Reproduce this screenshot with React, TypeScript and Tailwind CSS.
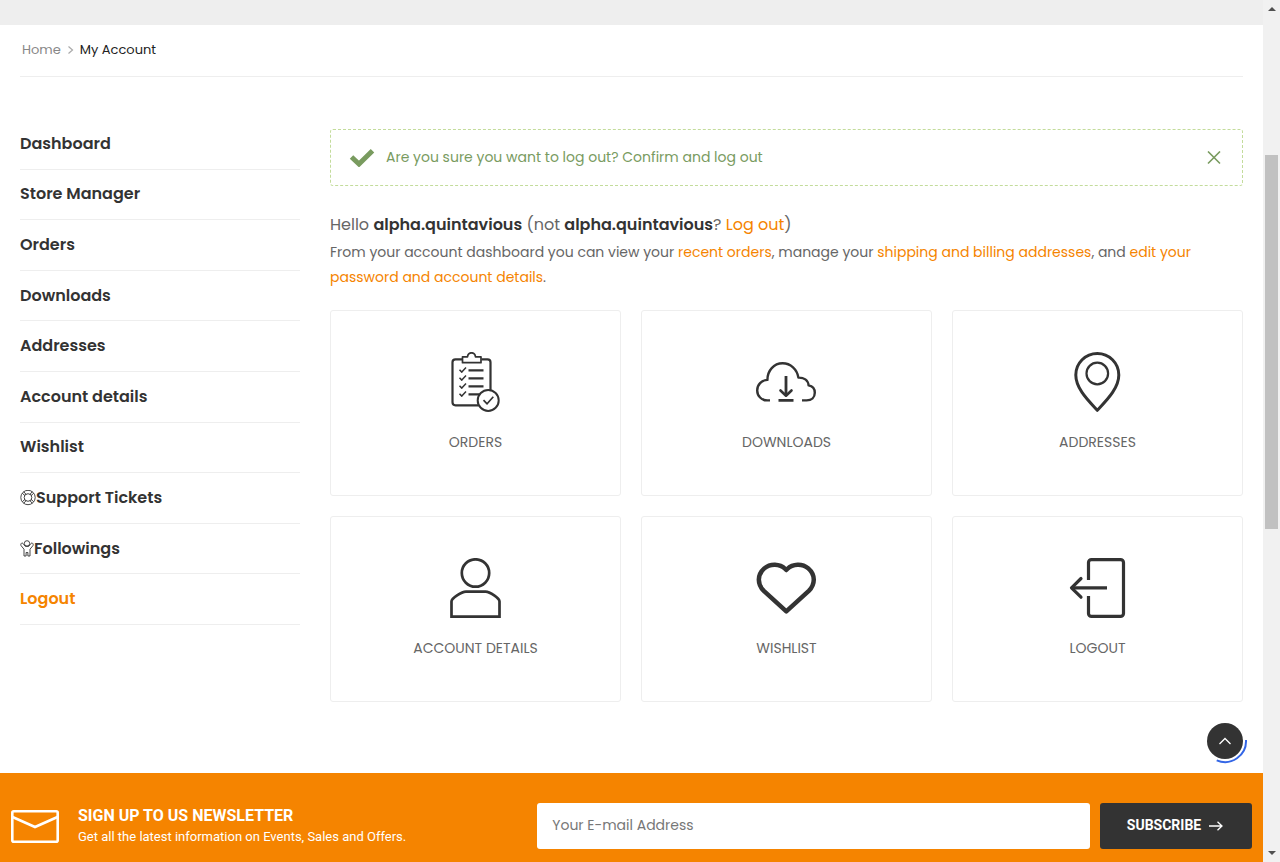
import type { ReactNode } from "react";

const stroke = {
  fill: "none",
  stroke: "currentColor",
  strokeLinecap: "butt" as const,
  strokeLinejoin: "round" as const,
};

const LifebuoyIcon = () => (
  <svg viewBox="0 0 16 16" className="size-4 shrink-0" aria-hidden="true" {...stroke} strokeWidth="0.9">
    <circle cx="8" cy="7.500" r="7.200" />
    <circle cx="8" cy="7.500" r="3.800" />
    <path d="M2.300 3.300 5 5.700M3.800 1.800 6.200 4.500M9.800 4.500l2.400-2.700M11 5.700l2.700-2.400M11 9.300l2.700 2.400M9.800 10.500l2.400 2.700M6.200 10.500l-2.400 2.700M5 9.300l-2.700 2.400" />
  </svg>
);

const FollowerIcon = () => (
  <svg viewBox="0 0 14 17" className="h-[17px] w-[14px] shrink-0" aria-hidden="true" {...stroke} strokeWidth="0.9">
    <circle cx="7" cy="3.400" r="2.700" />
    <path d="M4 16V9.200L1.100 5.700C.6 4.900.7 3.700 1.500 3.200c.8-.4 1.400 0 1.900.8L5.300 6.400h3.400L10.600 4c.5-.8 1.100-1.200 1.900-.8.8.5.9 1.700.4 2.500L10 9.200V16H7.900v-3.500H6.100V16z" />
  </svg>
);

const OrdersIcon = () => (
  <svg viewBox="0 0 61 60" className="h-[60px] w-[61px]" aria-hidden="true" {...stroke} strokeWidth="2.200">
    <path d="M17 7.300h-6.500a3 3 0 0 0-3 3v40a3 3 0 0 0 3 3H33.500M36.500 7.300h6a3 3 0 0 1 3 3V38" />
    <path strokeWidth="1.700" d="M17.500 4.800h5c.3-2.400 1.700-4 4-4s3.700 1.600 4 4h5.500v5.900H17.500z" />
    <path strokeWidth="1.500" d="m14.500 17.800 2.300 2.300 4.200-4.600m-6.500 10.300 2.300 2.300 4.200-4.600m-6.500 10.300 2.300 2.300 4.200-4.600m-6.500 10.300 2.300 2.300 4.200-4.600" />
    <path d="M23.500 18.300h15M23.500 26.300h15M23.500 34.300h15M23.500 42.300h11" />
    <circle cx="43.200" cy="48.400" r="10.500" strokeWidth="2" />
    <path strokeWidth="1.700" d="m38.500 48.200 3.600 3.600 6.200-7" />
  </svg>
);

const DownloadIcon = () => (
  <svg viewBox="0 0 61 60" className="h-[60px] w-[61px]" aria-hidden="true" {...stroke} strokeWidth="2.400">
    <path d="M14 48.400h-2.800C5.600 48.400 1.200 44 1.200 38.400c0-5.600 4.300-10.300 10.200-10.500C11.400 18.500 17.900 11.300 26.600 11.300c8 0 14.500 6 15.800 14.300 5.400-.2 9.700 2.600 10.200 7.800 3.900.7 6.200 3.700 6.200 7.400 0 4.500-3.300 7.600-8.200 7.600H46" />
    <path strokeWidth="2.800" d="M22.500 48.400h15M30 24v19" />
    <path strokeWidth="2.600" strokeLinecap="round" d="m24.500 38.500 5.500 5.200 5.500-5.200" />
  </svg>
);

const PinIcon = () => (
  <svg viewBox="0 0 61 60" className="h-[60px] w-[61px]" aria-hidden="true" {...stroke} strokeWidth="3">
    <path d="M30.300 58.300C22.300 49.500 8.800 37 8.800 23a21.500 21.500 0 0 1 43 0c0 14-13.500 26.500-21.500 35.300z" />
    <circle cx="30.300" cy="21.500" r="10.800" strokeWidth="2.200" />
  </svg>
);

const PersonIcon = () => (
  <svg viewBox="0 0 61 60" className="h-[60px] w-[61px]" aria-hidden="true" {...stroke} strokeWidth="2.700" strokeLinejoin="miter">
    <circle cx="30.500" cy="15" r="13.700" />
    <path d="M6.500 58.600V43.500c0-3 10-9.800 14.500-9.800h19.500c4.500 0 14 6.800 14 9.800v15.100z" />
  </svg>
);

const HeartIcon = () => (
  <svg viewBox="0 0 61 60" className="h-[60px] w-[61px]" aria-hidden="true" {...stroke} strokeWidth="4.500">
    <path d="m30.300 12-1-1C23.800 5.600 14.300 5.200 8.300 10.400c-7.200 6.300-7.200 15.800-.5 22.500l22.500 20.500 22.500-20.500c6.700-6.700 6.700-16.200-.5-22.500C46.300 5.200 36.800 5.600 31.300 11z" />
  </svg>
);

const LogoutIcon = () => (
  <svg viewBox="0 0 61 60" className="h-[60px] w-[61px]" aria-hidden="true" {...stroke} strokeWidth="3.200">
    <path d="M21.500 22V4.600a3 3 0 0 1 3-3h29a3 3 0 0 1 3 3v50.800a3 3 0 0 1-3 3h-29a3 3 0 0 1-3-3V38" />
    <path d="M40 29.800H5" />
    <path strokeLinecap="round" d="M14 20.500 4.500 29.800 14 39.200" />
  </svg>
);

const navItems: { label: string; icon?: ReactNode; active?: boolean }[] = [
  { label: "Dashboard" },
  { label: "Store Manager" },
  { label: "Orders" },
  { label: "Downloads" },
  { label: "Addresses" },
  { label: "Account details" },
  { label: "Wishlist" },
  { label: "Support Tickets", icon: <LifebuoyIcon /> },
  { label: "Followings", icon: <FollowerIcon /> },
  { label: "Logout", active: true },
];

const cards: { label: string; icon: ReactNode }[] = [
  { label: "Orders", icon: <OrdersIcon /> },
  { label: "Downloads", icon: <DownloadIcon /> },
  { label: "Addresses", icon: <PinIcon /> },
  { label: "Account details", icon: <PersonIcon /> },
  { label: "Wishlist", icon: <HeartIcon /> },
  { label: "Logout", icon: <LogoutIcon /> },
];

function Link({ children }: { children: ReactNode }) {
  return <a href="#" className="text-[#f58400]">{children}</a>;
}

function Breadcrumb() {
  return (
    <nav aria-label="Breadcrumb" className="mx-5 flex items-center border-b border-[#eee] px-0.5 pt-3.5 pb-[15px] text-[13px] leading-[22px]">
      <a href="#" className="text-[#888]">Home</a>
      <svg viewBox="0 0 7 8" className="mx-1.5 h-2 w-[7px]" aria-hidden="true" fill="none" stroke="#aaa" strokeWidth="1.200">
        <path d="m1.500.5 4 3.500-4 3.500" />
      </svg>
      <span className="text-[#222]">My Account</span>
    </nav>
  );
}

function AccountNav() {
  return (
    <nav aria-label="Account" className="w-[280px] shrink-0">
      <ul className="grid min-h-[506px] auto-rows-fr">
        {navItems.map(({ label, icon, active }) => (
          <li key={label} className="flex border-b border-[#eee]">
            <a
              href="#"
              className={
                active
                  ? "flex flex-1 items-center text-base font-semibold text-[#f58400]"
                  : "flex flex-1 items-center text-base font-semibold text-[#333]"
              }
            >
              {icon}
              {label}
            </a>
          </li>
        ))}
      </ul>
    </nav>
  );
}

function Notice() {
  return (
    <div role="status" className="flex items-center rounded-[3px] border border-dashed border-[#c3dc9b] py-[15px] pr-[21px] pl-[18px] text-sm leading-[25px] text-[#799b5f]">
      <svg viewBox="0 0 26 18" className="mr-[11px] h-[18px] w-[26px]" aria-hidden="true" fill="none" stroke="currentColor" strokeWidth="5">
        <path d="m2.500 8 7.500 7L23.500 1.800" />
      </svg>
      <p className="flex-1">
        Are you sure you want to log out? <a href="#">Confirm and log out</a>
      </p>
      <button type="button" aria-label="Dismiss">
        <svg viewBox="0 0 14 14" className="size-3.5" aria-hidden="true" fill="none" stroke="currentColor" strokeWidth="1.600">
          <path d="m1 .5 12 12m0-12-12 12" />
        </svg>
      </button>
    </div>
  );
}

function Dashboard() {
  return (
    <main className="min-w-0 flex-1 pt-2.5 text-[#666]">
      <Notice />
      <p className="mt-[25px] mb-px text-base leading-7">
        Hello <strong className="font-semibold text-[#333]">alpha.quintavious</strong> (not{" "}
        <strong className="font-semibold text-[#333]">alpha.quintavious</strong>? <Link>Log out</Link>)
      </p>
      <p className="text-sm leading-[25px]">
        From your account dashboard you can view your <Link>recent orders</Link>, manage your{" "}
        <Link>shipping and billing addresses</Link>, and <Link>edit your password and account details</Link>.
      </p>
      <ul className="mt-5 grid grid-cols-3 gap-5">
        {cards.map(({ label, icon }) => (
          <li key={label}>
            <a href="#" className="flex flex-col items-center rounded-[3px] border border-[#eee] pt-[41px] pb-10 text-[#333]">
              {icon}
              <span className="mt-[17px] text-sm leading-[26px] text-[#666] uppercase">{label}</span>
            </a>
          </li>
        ))}
      </ul>
    </main>
  );
}

function Newsletter() {
  return (
    <section className="flex flex-1 items-start bg-[#f58400] pt-[30px] pb-[13px] text-white">
      <div className="flex w-5/12 items-center gap-[19px] pt-0.5 pl-[11px]">
        <svg viewBox="0 0 48 33" className="h-[33px] w-12 shrink-0" aria-hidden="true" fill="none" stroke="currentColor" strokeWidth="2.600">
          <rect x="1.300" y="1.300" width="45.400" height="30.400" rx="1.500" />
          <path d="M1.500 7 24 17 46.500 7" />
        </svg>
        <div className="font-['Roboto',sans-serif]">
          <h2 className="text-base leading-[22px] font-bold uppercase">Sign up to us newsletter</h2>
          <p className="text-[13px] leading-5">Get all the latest information on Events, Sales and Offers.</p>
        </div>
      </div>
      <form className="flex flex-1 gap-2.5 px-[11px]" onSubmit={(e) => e.preventDefault()}>
        <input
          type="email"
          aria-label="Your E-mail Address"
          placeholder="Your E-mail Address"
          className="h-[46px] min-w-0 flex-1 rounded-[3px] bg-white px-[15px] pb-0.5 text-sm text-[#333] outline-none placeholder:text-[#777]"
        />
        <button type="submit" className="flex h-[46px] w-[152px] items-center justify-center gap-2 rounded-[3px] bg-[#333] pr-0.5 pb-0.5 font-['Roboto',sans-serif] text-sm font-bold uppercase">
          Subscribe
          <svg viewBox="0 0 14 10" className="mt-0.5 h-2.5 w-3.5" aria-hidden="true" fill="none" stroke="currentColor" strokeWidth="1.300">
            <path d="M0 5h13M8.500.7 13 5 8.500 9.300" />
          </svg>
        </button>
      </form>
    </section>
  );
}

function BackToTop() {
  return (
    <button type="button" aria-label="Back to top" className="fixed right-8 bottom-[98px] size-[46px]">
      <svg viewBox="0 0 46 46" className="size-[46px]" aria-hidden="true" fill="none">
        <circle cx="23" cy="23" r="18" fill="#333" />
        <path d="m17.500 26 5.500-5.500 5.500 5.500" stroke="#fff" strokeWidth="1.300" />
        <path d="M44 22A21 21 0 0 1 14.700 42.300" stroke="#3366e6" strokeWidth="2" />
      </svg>
    </button>
  );
}

function ScrollTrack() {
  return (
    <div aria-hidden="true" className="flex w-[17px] shrink-0 flex-col items-center justify-between bg-[#f1f1f1] py-[7px]">
      <svg viewBox="0 0 8 4" className="h-1 w-2 fill-[#505050]"><path d="M0 4 4 0l4 4z" /></svg>
      <div className="mt-36 mb-auto h-[374px] w-[13px] bg-[#c1c1c1]" />
      <svg viewBox="0 0 8 4" className="h-1 w-2 fill-[#505050]"><path d="M0 0h8L4 4z" /></svg>
    </div>
  );
}

export default function App() {
  return (
    <div className="flex min-h-screen bg-white font-['Poppins','Inter',sans-serif]">
      <div className="flex min-w-0 flex-1 flex-col">
        <div className="h-[25px] bg-[#eee]" />
        <Breadcrumb />
        <div className="mt-[42px] mb-[71px] flex gap-[30px] px-5">
          <AccountNav />
          <Dashboard />
        </div>
        <Newsletter />
      </div>
      <ScrollTrack />
      <BackToTop />
    </div>
  );
}
